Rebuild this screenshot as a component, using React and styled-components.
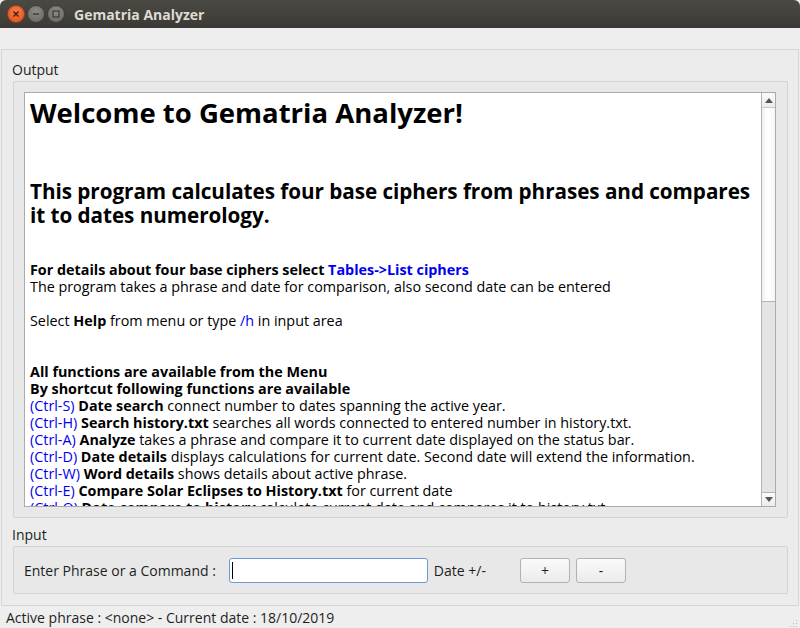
import React from "react";
import styled, { createGlobalStyle } from "styled-components";

const FONT = `"Open Sans", "Noto Sans", "DejaVu Sans", sans-serif`;

const GlobalStyle = createGlobalStyle`
  html, body {
    margin: 0;
    padding: 0;
    background: #eeeeee;
    font-family: ${FONT};
  }
  * { box-sizing: border-box; }
`;

const shortcuts = [
  ["(Ctrl-S)", "Date search", "connect number to dates spanning the active year."],
  ["(Ctrl-H)", "Search history.txt", "searches all words connected to entered number in history.txt."],
  ["(Ctrl-A)", "Analyze", "takes a phrase and compare it to current date displayed on the status bar."],
  ["(Ctrl-D)", "Date details", "displays calculations for current date. Second date will extend the information."],
  ["(Ctrl-W)", "Word details", "shows details about active phrase."],
  ["(Ctrl-E)", "Compare Solar Eclipses to History.txt", "for current date"],
  ["(Ctrl-Q)", "Date compare to history", "calculate current date and compares it to history.txt"],
];

function App() {
  return (
    <Window>
      <GlobalStyle />
      <TitleBar>
        <WinButtons>
          <WinBtn kind="close">
            <svg width="8" height="8" viewBox="0 0 8 8">
              <path d="M1.5 1.5 L6.5 6.5 M6.5 1.5 L1.5 6.5" stroke="#3a1a0e" strokeWidth="1.2" />
            </svg>
          </WinBtn>
          <WinBtn>
            <svg width="8" height="8" viewBox="0 0 8 8">
              <path d="M1 4 H7" stroke="#3b3a36" strokeWidth="1.4" />
            </svg>
          </WinBtn>
          <WinBtn>
            <svg width="8" height="8" viewBox="0 0 8 8">
              <rect x="1" y="1" width="6" height="6" fill="none" stroke="#3b3a36" strokeWidth="1.2" />
            </svg>
          </WinBtn>
        </WinButtons>
        <WinTitle>Gematria Analyzer</WinTitle>
      </TitleBar>

      <Body>
        <MainFrame>
          <GroupLabel>Output</GroupLabel>
          <GroupBox>
            <TextArea>
              <Content>
                <H1>Welcome to Gematria Analyzer!</H1>
                <H2>
                  This program calculates four base ciphers from phrases and compares it to dates numerology.
                </H2>
                <Line>
                  <b>For details about four base ciphers select </b>
                  <Link bold>Tables-&gt;List ciphers</Link>
                </Line>
                <Line>The program takes a phrase and date for comparison, also second date can be entered</Line>
                <Line gap={17}>
                  Select <b>Help</b> from menu or type <Link>/h</Link> in input area
                </Line>
                <Line gap={34}>
                  <b>All functions are available from the Menu</b>
                </Line>
                <Line>
                  <b>By shortcut following functions are available</b>
                </Line>
                {shortcuts.map(([key, name, desc]) => (
                  <Line key={key}>
                    <Link>{key}</Link> <b>{name}</b> {desc}
                  </Line>
                ))}
              </Content>
              <ScrollBar>
                <ArrowBtn>
                  <svg width="8" height="5" viewBox="0 0 8 5">
                    <path d="M0 5 L4 0 L8 5 Z" fill="#555" />
                  </svg>
                </ArrowBtn>
                <Handle />
                <Track />
                <ArrowBtn bottom>
                  <svg width="8" height="5" viewBox="0 0 8 5">
                    <path d="M0 0 L8 0 L4 5 Z" fill="#555" />
                  </svg>
                </ArrowBtn>
              </ScrollBar>
            </TextArea>
          </GroupBox>

          <GroupLabel>Input</GroupLabel>
          <InputBox>
            <FieldLabel>Enter Phrase or a Command :</FieldLabel>
            <PhraseInput>
              <Caret />
            </PhraseInput>
            <FieldLabel>Date +/-</FieldLabel>
            <Buttons>
              <Button>+</Button>
              <Button>-</Button>
            </Buttons>
          </InputBox>
        </MainFrame>
        <StatusBar>
          <span>Active phrase : &lt;none&gt; - Current date : 18/10/2019</span>
          <Grip>
            <svg width="10" height="10" viewBox="0 0 10 10">
              {[
                [8, 2], [8, 5], [5, 5], [8, 8], [5, 8], [2, 8],
              ].map(([x, y]) => (
                <rect key={x + "-" + y} x={x} y={y} width="1" height="1" fill="#b8b8b8" />
              ))}
            </svg>
          </Grip>
        </StatusBar>
      </Body>
    </Window>
  );
}

export default App;

const Window = styled.div`
  width: 800px;
  height: 628px;
  display: flex;
  flex-direction: column;
  overflow: hidden;
  background: #eeeeee;
`;

const TitleBar = styled.div`
  height: 28px;
  flex: none;
  display: flex;
  align-items: center;
  padding-left: 7px;
  background: linear-gradient(#4a4944, #3b3a36);
  border-radius: 6px 6px 0 0;
`;

const WinButtons = styled.div`
  display: flex;
  gap: 2px;
`;

const WinBtn = styled.div`
  width: 18px;
  height: 18px;
  border-radius: 50%;
  display: flex;
  align-items: center;
  justify-content: center;
  background: ${(p) =>
    p.kind === "close"
      ? "radial-gradient(circle at 50% 35%, #f47a4c, #e0501c)"
      : "radial-gradient(circle at 50% 35%, #8d8b85, #66645f)"};
  border: 1px solid ${(p) => (p.kind === "close" ? "#a83c14" : "#3e3d39")};
`;

const WinTitle = styled.div`
  margin-left: 9px;
  color: #dfdbd2;
  font-weight: 700;
  font-size: 14px;
`;

const Body = styled.div`
  flex: 1;
  display: flex;
  flex-direction: column;
  padding-top: 21px;
`;

const MainFrame = styled.div`
  margin: 0 1px;
  height: 557px;
  border: 1px solid #d6d6d6;
  background: #ececec;
  padding: 10px 10px 0 11px;
  display: flex;
  flex-direction: column;
`;

const GroupLabel = styled.div`
  font-size: 14px;
  line-height: 20px;
  color: #1e1e1e;
  height: 20px;
  margin: 0 0 1px -1px;
`;

const GroupBox = styled.div`
  height: 437px;
  border: 1px solid #d3d3d3;
  border-radius: 2px;
  background: #e8e8e8;
  padding: 10px 11px 10px 10px;
  margin-bottom: 7px;
`;

const TextArea = styled.div`
  height: 415px;
  border: 1px solid #ababab;
  background: #ffffff;
  display: flex;
`;

const Content = styled.div`
  flex: 1;
  overflow: hidden;
  padding: 0 2px 0 5px;
  color: #000;
  font-size: 14.35px;
`;

const H1 = styled.div`
  font-size: 27.5px;
  font-weight: 700;
  line-height: 40px;
  margin-bottom: 46px;
`;

const H2 = styled.div`
  font-size: 20.7px;
  font-weight: 700;
  line-height: 24px;
  letter-spacing: -0.05px;
  margin-bottom: 34px;
`;

const Line = styled.div`
  line-height: 17px;
  white-space: nowrap;
  margin-top: ${(p) => p.gap || 0}px;
  b {
    font-weight: 700;
  }
`;

const Link = styled.span`
  color: #0000f0;
  font-weight: ${(p) => (p.bold ? 700 : 400)};
`;

const ScrollBar = styled.div`
  width: 14px;
  flex: none;
  border-left: 1px solid #b4b4b4;
  display: flex;
  flex-direction: column;
  background: #e2e2e2;
`;

const ArrowBtn = styled.div`
  height: 14px;
  flex: none;
  display: flex;
  align-items: center;
  justify-content: center;
  background: linear-gradient(#fbfbfb, #ececec);
  border-top: ${(p) => (p.bottom ? "1px solid #b4b4b4" : "none")};
`;

const Handle = styled.div`
  height: 195px;
  flex: none;
  background: linear-gradient(90deg, #eeeeee, #ffffff 40%, #f6f6f6);
  border-top: 1px solid #c8c8c8;
  border-bottom: 1px solid #b4b4b4;
`;

const Track = styled.div`
  flex: 1;
  background: #e4e4e4;
`;

const InputBox = styled.div`
  height: 48px;
  border: 1px solid #d3d3d3;
  border-radius: 2px;
  background: #e8e8e8;
  display: flex;
  align-items: center;
  padding-left: 10px;
`;

const FieldLabel = styled.div`
  font-size: 14px;
  color: #1e1e1e;
  white-space: nowrap;
`;

const PhraseInput = styled.div`
  width: 199px;
  height: 25px;
  margin: 0 6px 0 13px;
  background: #ffffff;
  border: 1px solid #6b9bd2;
  border-radius: 3px;
  display: flex;
  align-items: center;
  padding-left: 2px;
`;

const Caret = styled.div`
  width: 1px;
  height: 17px;
  background: #000;
`;

const Buttons = styled.div`
  display: flex;
  gap: 6px;
  margin-left: 34px;
`;

const Button = styled.div`
  width: 50px;
  height: 25px;
  border: 1px solid #b2b2b2;
  border-radius: 3px;
  background: linear-gradient(#fafafa, #ebebeb);
  display: flex;
  align-items: center;
  justify-content: center;
  font-size: 14px;
  color: #1e1e1e;
`;

const StatusBar = styled.div`
  flex: 1;
  display: flex;
  align-items: center;
  justify-content: space-between;
  padding: 0 2px 0 6px;
  font-size: 14px;
  color: #1e1e1e;
`;

const Grip = styled.div`
  align-self: flex-end;
  display: flex;
`;
